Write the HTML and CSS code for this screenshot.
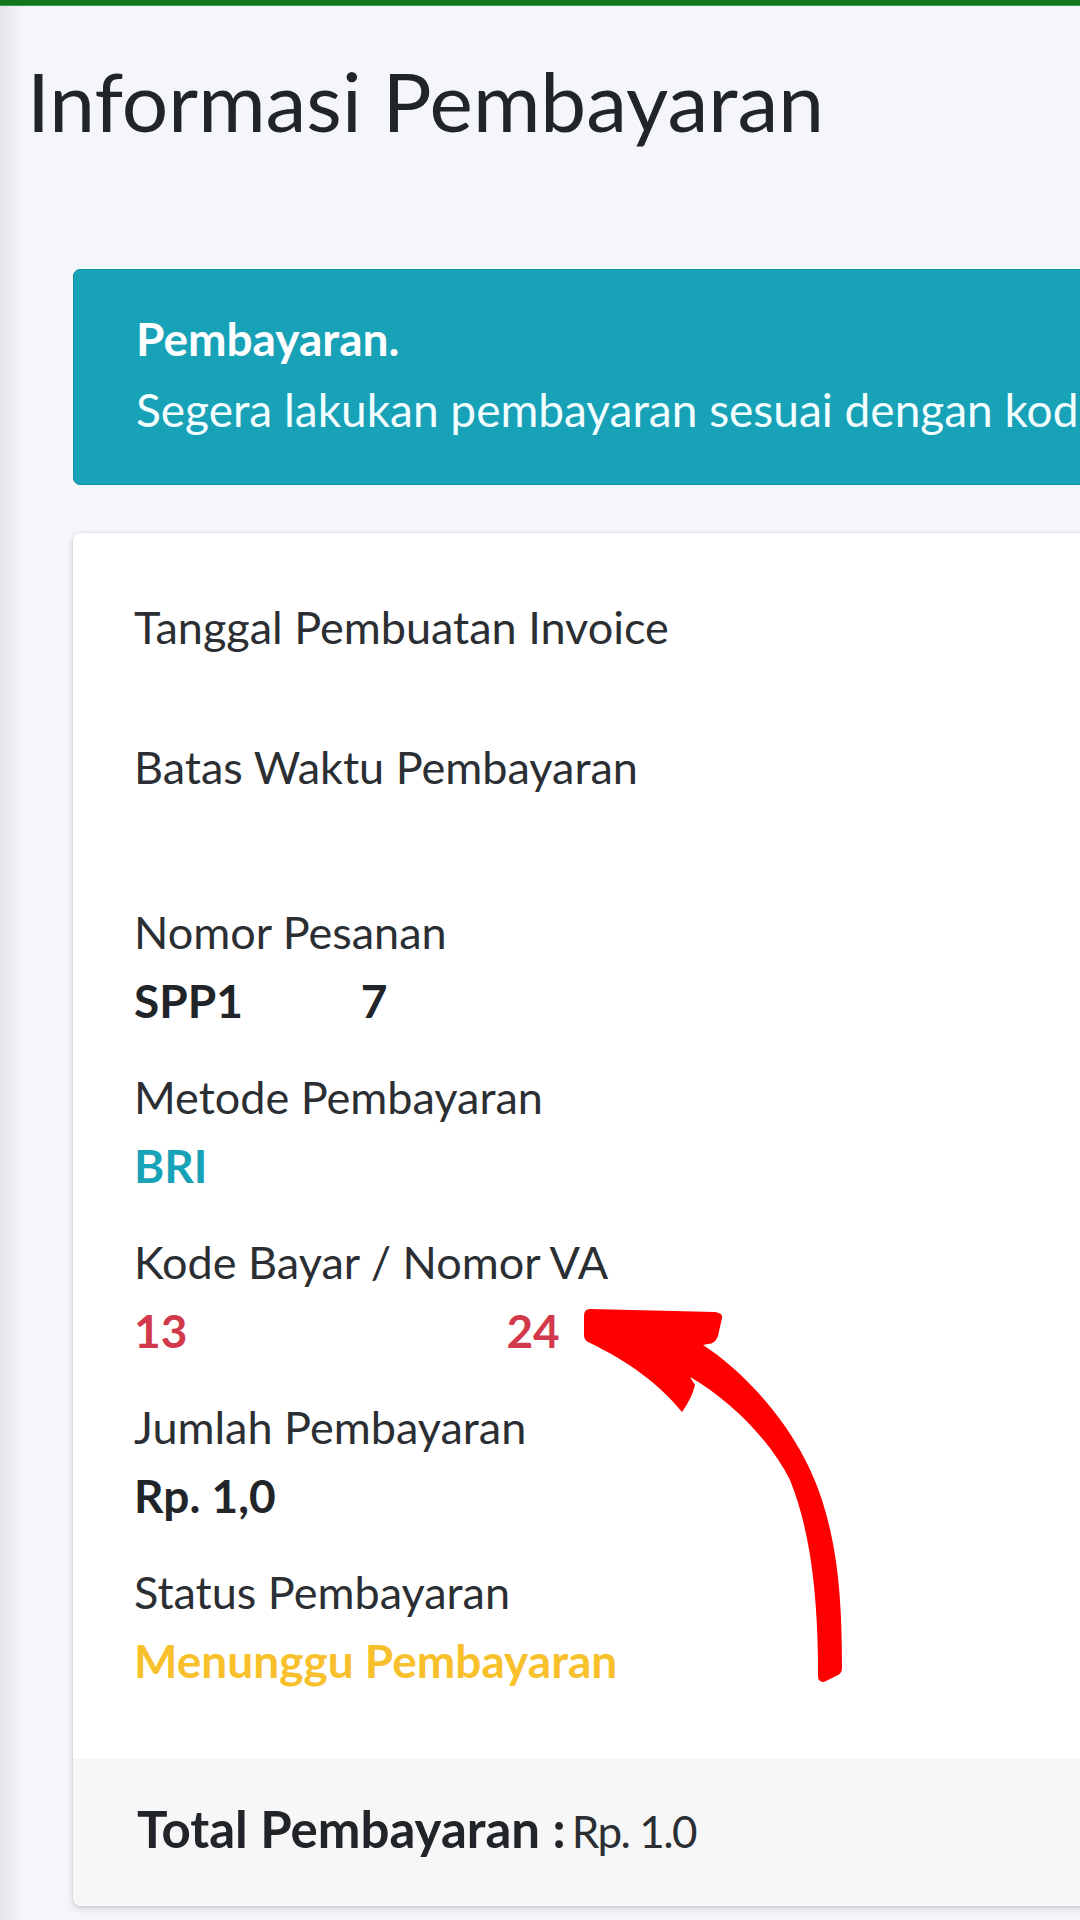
FILE: index.html
```html
<!DOCTYPE html>
<html lang="id">
<head>
<meta charset="utf-8">
<title>Informasi Pembayaran</title>
<link rel="stylesheet" href="styles.css">
</head>
<body>
<div class="topbar"></div>
<div class="page">
  <h1 class="title">Informasi Pembayaran</h1>
  <div class="alert">
    <h5 class="alert-title">Pembayaran.</h5>
    <p class="alert-text">Segera lakukan pembayaran sesuai dengan kode bayar / nomor VA di bawah ini.</p>
  </div>
  <div class="card">
    <div class="card-body">
      <div class="field">
        <div class="label">Tanggal Pembuatan Invoice</div>
        <div class="value value-short"></div>
      </div>
      <div class="field">
        <div class="label">Batas Waktu Pembayaran</div>
        <div class="value"></div>
      </div>
      <div class="field">
        <div class="label">Nomor Pesanan</div>
        <div class="value strong">SPP1<span class="redact redact-order"></span>7</div>
      </div>
      <div class="field">
        <div class="label">Metode Pembayaran</div>
        <div class="value strong text-info">BRI</div>
      </div>
      <div class="field">
        <div class="label">Kode Bayar / Nomor VA</div>
        <div class="value strong text-danger">13<span class="redact redact-va"></span>24</div>
      </div>
      <div class="field">
        <div class="label">Jumlah Pembayaran</div>
        <div class="value strong">Rp. 1,0</div>
      </div>
      <div class="field">
        <div class="label">Status Pembayaran</div>
        <div class="value strong text-warning">Menunggu Pembayaran</div>
      </div>
    </div>
    <div class="card-footer"><b>Total Pembayaran :</b><span class="amount">Rp. 1.0</span></div>
  </div>
</div>
<svg class="annotation" viewBox="0 0 1080 1920" width="1080" height="1920" aria-hidden="true">
  <path fill="#ff0000" d="M 590 1309 L 715 1312 Q 723 1313 722 1318 L 718 1336 Q 715 1344 708 1344 L 703 1345 C 745 1372 800 1430 822 1500 C 838 1550 842 1600 842 1668 Q 842 1674 836 1676 L 824 1682 Q 818 1682 818 1676 L 818 1660 C 817 1590 810 1530 790 1480 C 770 1440 730 1400 690 1377 L 695 1385 Q 692 1398 682 1412 C 660 1385 630 1362 588 1342 Q 584 1340 584 1335 L 584 1316 Q 584 1309 590 1309 Z"/>
</svg>
</body>
</html>
```

FILE: styles.css
```css
html, body {
  margin: 0;
  padding: 0;
}
body {
  width: 1080px;
  height: 1920px;
  overflow: hidden;
  position: relative;
  font-family: Lato, "Noto Sans", sans-serif;
  color: #212529;
  background: linear-gradient(to right, #e2e4e8 0, #eef0f3 14px, #f4f6f9 26px, #f4f6f9 100%);
}
.topbar {
  height: 6px;
  background: #10781a;
  border-bottom: 1px solid #3f9a46;
  box-sizing: border-box;
}
.page {
  padding-left: 73px;
  margin-right: -120px;
}
.title {
  margin: 45px 0 0 -46px;
  font-weight: 400;
  font-size: 82px;
  line-height: 98px;
  color: #212529;
  white-space: nowrap;
}
.alert {
  margin-top: 120px;
  background: #17a2b8;
  border: 1px solid #148ea1;
  border-radius: 7px;
  color: #fff;
  padding: 42px 0 47px 62px;
  white-space: nowrap;
}
.alert-title {
  margin: 0 0 17px 0;
  font-size: 46px;
  font-weight: 700;
  line-height: 54px;
}
.alert-text {
  margin: 0;
  font-size: 46px;
  line-height: 54px;
  color: #f2fdff;
}
.card {
  margin-top: 48px;
  background: #fff;
  border-radius: 8px;
  box-shadow: 0 0 3px rgba(0,0,0,.12), 0 3px 6px rgba(0,0,0,.14);
  overflow: hidden;
}
.card-body {
  padding: 60px 0 63px 61px;
}
.field {
  margin-bottom: 27px;
}
.field:last-child {
  margin-bottom: 0;
}
.label {
  font-size: 45px;
  line-height: 68px;
  color: #2b2f33;
  white-space: nowrap;
}
.value {
  font-size: 46px;
  line-height: 70px;
  height: 70px;
  white-space: nowrap;
}
.value-short {
  height: 45px;
}
.strong {
  font-weight: 700;
}
.text-info { color: #17a2b8; }
.text-danger { color: #d23a4b; }
.text-warning { color: #f8c12c; }
.redact {
  display: inline-block;
  height: 50px;
  vertical-align: middle;
  background: #fff;
}
.redact-order { width: 118px; }
.redact-va { width: 319px; }
.card-footer {
  background: #f7f7f7;
  padding: 40px 0 45px 64px;
  font-size: 51px;
  line-height: 60px;
  white-space: nowrap;
}
.card-footer b {
  font-weight: 700;
}
.amount {
  margin-left: 6px;
  font-size: 44px;
  letter-spacing: -1.5px;
  color: #2b2f33;
}
.annotation {
  position: absolute;
  left: 0;
  top: 0;
  pointer-events: none;
}
```
